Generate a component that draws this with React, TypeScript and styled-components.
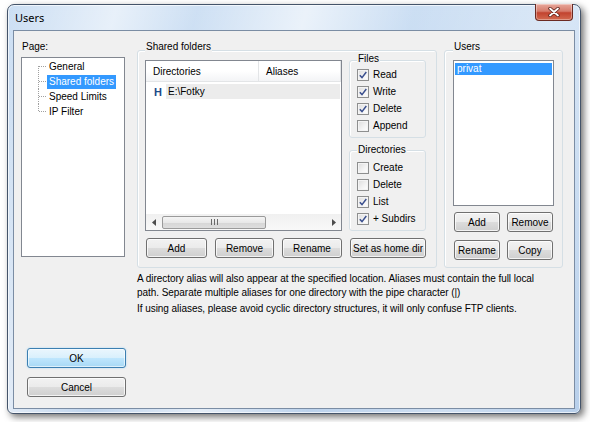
import styled, { createGlobalStyle, css } from "styled-components";

const GlobalStyle = createGlobalStyle`
  html, body {
    margin: 0;
    padding: 0;
    background: #ffffff;
  }
  body {
    font-family: "Liberation Sans", Arial, sans-serif;
    font-size: 10px;
    color: #000;
  }
  #root {
    width: 590px;
    height: 422px;
    overflow: hidden;
  }
  * {
    box-sizing: border-box;
  }
`;

const Desktop = styled.div`
  padding: 4px 0 0 7px;
`;

const Window = styled.div`
  width: 574px;
  height: 410px;
  display: flex;
  flex-direction: column;
  padding: 0 5px 4px;
  border: 1px solid #44546a;
  border-radius: 7px 7px 6px 6px;
  background:
    linear-gradient(
      105deg,
      rgba(255, 255, 255, 0.1) 0%,
      rgba(255, 255, 255, 0.6) 16%,
      rgba(255, 255, 255, 0.15) 28%,
      rgba(255, 255, 255, 0.65) 44%,
      rgba(255, 255, 255, 0.1) 60%,
      rgba(255, 255, 255, 0.35) 80%,
      rgba(255, 255, 255, 0.05) 100%
    ),
    linear-gradient(180deg, #c6dbf2 0%, #b4cdea 100%);
  box-shadow: inset 0 0 0 1px rgba(255, 255, 255, 0.65), 3px 3px 7px rgba(0, 0, 0, 0.55);
`;

const TitleBar = styled.div`
  height: 25px;
  display: flex;
  align-items: flex-start;
`;

const Title = styled.span`
  margin: 7px 0 0 2px;
  font-family: "Noto Sans", "Open Sans", sans-serif;
  font-size: 11px;
  line-height: 12px;
  color: #000;
`;

const CloseButton = styled.div`
  margin: -1px 2px 0 auto;
  width: 38px;
  height: 17px;
  display: flex;
  align-items: center;
  justify-content: center;
  border: 1px solid #6b2a22;
  border-top: none;
  border-radius: 0 0 4px 4px;
  background: linear-gradient(180deg, #e8a89b 0%, #d67a6a 45%, #c2432f 55%, #d36a4f 100%);
  box-shadow: inset 0 0 0 1px rgba(255, 255, 255, 0.35);
`;

const Client = styled.div`
  flex: 1;
  display: flex;
  gap: 11px;
  padding: 10px 11px 11px 7px;
  border: 1px solid #7b8da4;
  background: #f0f0f0;
`;

const Sidebar = styled.div`
  width: 105px;
  display: flex;
  flex-direction: column;
`;

const PageLabel = styled.div`
  margin-left: 1px;
  line-height: 12px;
`;

const TreeBox = styled.div`
  margin-top: 4px;
  width: 104px;
  height: 200px;
  padding-top: 1px;
  border: 1px solid #828790;
  background: #fff;
`;

const TreeItem = styled.div`
  display: flex;
  align-items: center;
  height: 15px;
  padding-left: 16px;
`;

const TreeLabel = styled.span<{ $selected?: boolean }>`
  padding: 0 2px;
  line-height: 14px;
  white-space: nowrap;
  ${(p) =>
    p.$selected &&
    css`
      background: #3399ff;
      color: #fff;
    `}
`;

const DialogButtons = styled.div`
  margin-top: auto;
  padding-left: 6px;
  display: flex;
  flex-direction: column;
  gap: 9px;
`;

const Button = styled.button<{ $w: number; $primary?: boolean }>`
  width: ${(p) => p.$w}px;
  height: 20px;
  padding: 0;
  font-family: inherit;
  font-size: 10px;
  font-weight: normal;
  color: #000;
  border: 1px solid #707070;
  border-radius: 3px;
  background: linear-gradient(180deg, #f2f2f2 0%, #ebebeb 48%, #dcdcdc 52%, #cfcfcf 100%);
  box-shadow: inset 0 0 0 1px rgba(255, 255, 255, 0.75);
  white-space: nowrap;
  ${(p) =>
    p.$primary &&
    css`
      border-color: #3c7fb1;
      background: linear-gradient(180deg, #eaf6fd 0%, #d9f0fc 48%, #bee6fd 52%, #a7d9f5 100%);
      box-shadow: inset 0 0 0 1px rgba(255, 255, 255, 0.6), 0 0 2px #9fd5f5;
    `}
`;

const Main = styled.div`
  flex: 1;
  display: flex;
  flex-direction: column;
  padding-top: 9px;
`;

const TopRow = styled.div`
  display: flex;
  gap: 7px;
`;

const GroupBox = styled.div<{ $w: number }>`
  width: ${(p) => p.$w}px;
  padding: 0 ${(p) => (p.$w > 200 ? 10 : 8)}px 7px ${(p) => (p.$w > 200 ? 7 : 8)}px;
  border: 1px solid #d5dfe5;
  border-radius: 3px;
  box-shadow: inset 1px 1px 0 #fff;
`;

const Legend = styled.div<{ $lift?: number }>`
  width: fit-content;
  margin: -${(p) => p.$lift ?? 10}px 0 0 0;
  padding: 0 1px;
  line-height: 12px;
  background: #f0f0f0;
  white-space: nowrap;
`;

const SharedBody = styled.div`
  margin-top: 7px;
  display: grid;
  grid-template-columns: 197px 77px;
  column-gap: 7px;
`;

const ListView = styled.div`
  height: 171px;
  display: flex;
  flex-direction: column;
  border: 1px solid #828790;
  background: #fff;
`;

const ListHeader = styled.div`
  height: 21px;
  display: flex;
  border-bottom: 1px solid #e3e5e7;
  background: linear-gradient(180deg, #ffffff 0%, #ffffff 50%, #f3f4f6 100%);
`;

const HeaderCell = styled.div<{ $w?: number }>`
  ${(p) => (p.$w ? `width: ${p.$w}px;` : "flex: 1;")}
  display: flex;
  align-items: center;
  padding-left: 7px;
  border-right: 1px solid #e3e5e7;
`;

const ListRows = styled.div`
  flex: 1;
  padding-top: 2px;
`;

const FolderRow = styled.div`
  height: 15px;
  display: flex;
  align-items: center;
  padding-left: 8px;
`;

const HomeMark = styled.span`
  width: 12px;
  font-weight: bold;
  font-size: 11px;
  color: #1d4a88;
`;

const FolderName = styled.span`
  flex: 1;
  margin-right: 1px;
  padding-left: 2px;
  line-height: 15px;
  background: #ececec;
`;

const HScroll = styled.div`
  height: 16px;
  display: flex;
  align-items: center;
  padding: 0 5px 0 6px;
  background: linear-gradient(180deg, #f0f0f0 0%, #f8f8f8 100%);
`;

const ScrollThumb = styled.div`
  margin-left: 6px;
  width: 104px;
  height: 13px;
  display: flex;
  align-items: center;
  justify-content: center;
  border: 1px solid #9a9a9a;
  border-radius: 2px;
  background: linear-gradient(180deg, #f4f4f4 0%, #e8e8e8 50%, #d6d6d6 52%, #dedede 100%);
`;

const ScrollSpacer = styled.div`
  flex: 1;
`;

const SideColumn = styled.div`
  display: flex;
  flex-direction: column;
  gap: 12px;
`;

const OptionBox = styled.div`
  padding: 0 4px 3px 7px;
  border: 1px solid #d5dfe5;
  border-radius: 3px;
  box-shadow: inset 1px 1px 0 #fff;
`;

const OptionRows = styled.div<{ $top: number }>`
  padding-top: ${(p) => p.$top}px;
`;

const CheckRow = styled.div`
  height: 17px;
  display: flex;
  align-items: center;
  gap: 4px;
  white-space: nowrap;
`;

const CheckBox = styled.span`
  width: 12px;
  height: 12px;
  display: flex;
  align-items: center;
  justify-content: center;
  border: 1px solid #8e8f8f;
  background: linear-gradient(135deg, #dcdcdc 0%, #f4f4f4 60%, #ffffff 100%);
  box-shadow: inset 0 0 0 1px #f4f4f4;
`;

const ButtonRow = styled.div`
  grid-column: 1 / span 2;
  margin-top: 7px;
  padding-left: 1px;
  display: flex;
  justify-content: space-between;
`;

const UserList = styled.div`
  margin-top: 7px;
  height: 146px;
  padding: 2px 1px;
  border: 1px solid #828790;
  background: #fff;
`;

const UserItem = styled.div<{ $selected?: boolean }>`
  height: 12px;
  line-height: 12px;
  padding-left: 2px;
  ${(p) =>
    p.$selected &&
    css`
      background: #3399ff;
      color: #fff;
    `}
`;

const UserButtons = styled.div`
  margin-top: 6px;
  padding-left: 1px;
  display: grid;
  grid-template-columns: 46px 46px;
  column-gap: 7px;
  row-gap: 8px;
`;

const Notes = styled.div`
  margin-top: 4px;
  letter-spacing: -0.05px;
`;

const Note = styled.p<{ $gap?: number }>`
  margin: ${(p) => p.$gap ?? 0}px 0 0;
  line-height: 14px;
  white-space: nowrap;
`;

const Connector = ({ first, last }: { first?: boolean; last?: boolean }) => (
  <svg width="9" height="15" style={{ flex: "none" }}>
    <line x1="0.5" y1={first ? 7 : 0} x2="0.5" y2={last ? 8 : 15} stroke="#a0a0a0" strokeDasharray="1 1" />
    <line x1="1" y1="7.5" x2="9" y2="7.5" stroke="#a0a0a0" strokeDasharray="1 1" />
  </svg>
);

const Check = ({ on, label }: { on?: boolean; label: string }) => (
  <CheckRow>
    <CheckBox>
      {on && (
        <svg width="10" height="10" viewBox="0 0 10 10">
          <path d="M1.8 5.2 L4 7.6 L8.3 2" fill="none" stroke="#3a4f8e" strokeWidth="1.5" />
        </svg>
      )}
    </CheckBox>
    <span>{label}</span>
  </CheckRow>
);

const Arrow = ({ dir }: { dir: "left" | "right" }) => (
  <svg width="4" height="7" viewBox="0 0 4 7">
    <polygon points={dir === "left" ? "4,0 0,3.5 4,7" : "0,0 4,3.5 0,7"} fill="#4d4d4d" />
  </svg>
);

const Grip = () => (
  <svg width="7" height="6" viewBox="0 0 7 6">
    <path d="M0.5 0 V6 M3.5 0 V6 M6.5 0 V6" stroke="#6a6a6a" strokeWidth="1" />
  </svg>
);

const CloseGlyph = () => (
  <svg width="12" height="10" viewBox="0 0 12 10">
    <path d="M2 1.5 L10 8.5 M10 1.5 L2 8.5" stroke="#5a1e16" strokeWidth="3.4" strokeLinecap="round" />
    <path d="M2 1.5 L10 8.5 M10 1.5 L2 8.5" stroke="#ffffff" strokeWidth="1.8" strokeLinecap="round" />
  </svg>
);

export default function App() {
  const pages = ["General", "Shared folders", "Speed Limits", "IP Filter"];

  return (
    <>
      <GlobalStyle />
      <Desktop>
        <Window>
          <TitleBar>
            <Title>Users</Title>
            <CloseButton>
              <CloseGlyph />
            </CloseButton>
          </TitleBar>

          <Client>
            <Sidebar>
              <PageLabel>Page:</PageLabel>
              <TreeBox>
                {pages.map((page, i) => (
                  <TreeItem key={page}>
                    <Connector first={i === 0} last={i === pages.length - 1} />
                    <TreeLabel $selected={page === "Shared folders"}>{page}</TreeLabel>
                  </TreeItem>
                ))}
              </TreeBox>
              <DialogButtons>
                <Button $w={99} $primary>
                  OK
                </Button>
                <Button $w={99}>Cancel</Button>
              </DialogButtons>
            </Sidebar>

            <Main>
              <TopRow>
                <GroupBox $w={300}>
                  <Legend>Shared folders</Legend>
                  <SharedBody>
                    <ListView>
                      <ListHeader>
                        <HeaderCell $w={113}>Directories</HeaderCell>
                        <HeaderCell>Aliases</HeaderCell>
                      </ListHeader>
                      <ListRows>
                        <FolderRow>
                          <HomeMark>H</HomeMark>
                          <FolderName>E:\Fotky</FolderName>
                        </FolderRow>
                      </ListRows>
                      <HScroll>
                        <Arrow dir="left" />
                        <ScrollThumb>
                          <Grip />
                        </ScrollThumb>
                        <ScrollSpacer />
                        <Arrow dir="right" />
                      </HScroll>
                    </ListView>

                    <SideColumn>
                      <OptionBox>
                        <Legend $lift={8}>Files</Legend>
                        <OptionRows $top={1}>
                          <Check on label="Read" />
                          <Check on label="Write" />
                          <Check on label="Delete" />
                          <Check label="Append" />
                        </OptionRows>
                      </OptionBox>
                      <OptionBox>
                        <Legend $lift={7}>Directories</Legend>
                        <OptionRows $top={3}>
                          <Check label="Create" />
                          <Check label="Delete" />
                          <Check on label="List" />
                          <Check on label="+ Subdirs" />
                        </OptionRows>
                      </OptionBox>
                    </SideColumn>

                    <ButtonRow>
                      <Button $w={61}>Add</Button>
                      <Button $w={59}>Remove</Button>
                      <Button $w={60}>Rename</Button>
                      <Button $w={76}>Set as home dir</Button>
                    </ButtonRow>
                  </SharedBody>
                </GroupBox>

                <GroupBox $w={119}>
                  <Legend>Users</Legend>
                  <UserList>
                    <UserItem $selected>privat</UserItem>
                  </UserList>
                  <UserButtons>
                    <Button $w={46}>Add</Button>
                    <Button $w={46}>Remove</Button>
                    <Button $w={46}>Rename</Button>
                    <Button $w={46}>Copy</Button>
                  </UserButtons>
                </GroupBox>
              </TopRow>

              <Notes>
                <Note>
                  A directory alias will also appear at the specified location. Aliases must contain the full local
                  <br />
                  path. Separate multiple aliases for one directory with the pipe character (|)
                </Note>
                <Note $gap={2}>
                  If using aliases, please avoid cyclic directory structures, it will only confuse FTP clients.
                </Note>
              </Notes>
            </Main>
          </Client>
        </Window>
      </Desktop>
    </>
  );
}
